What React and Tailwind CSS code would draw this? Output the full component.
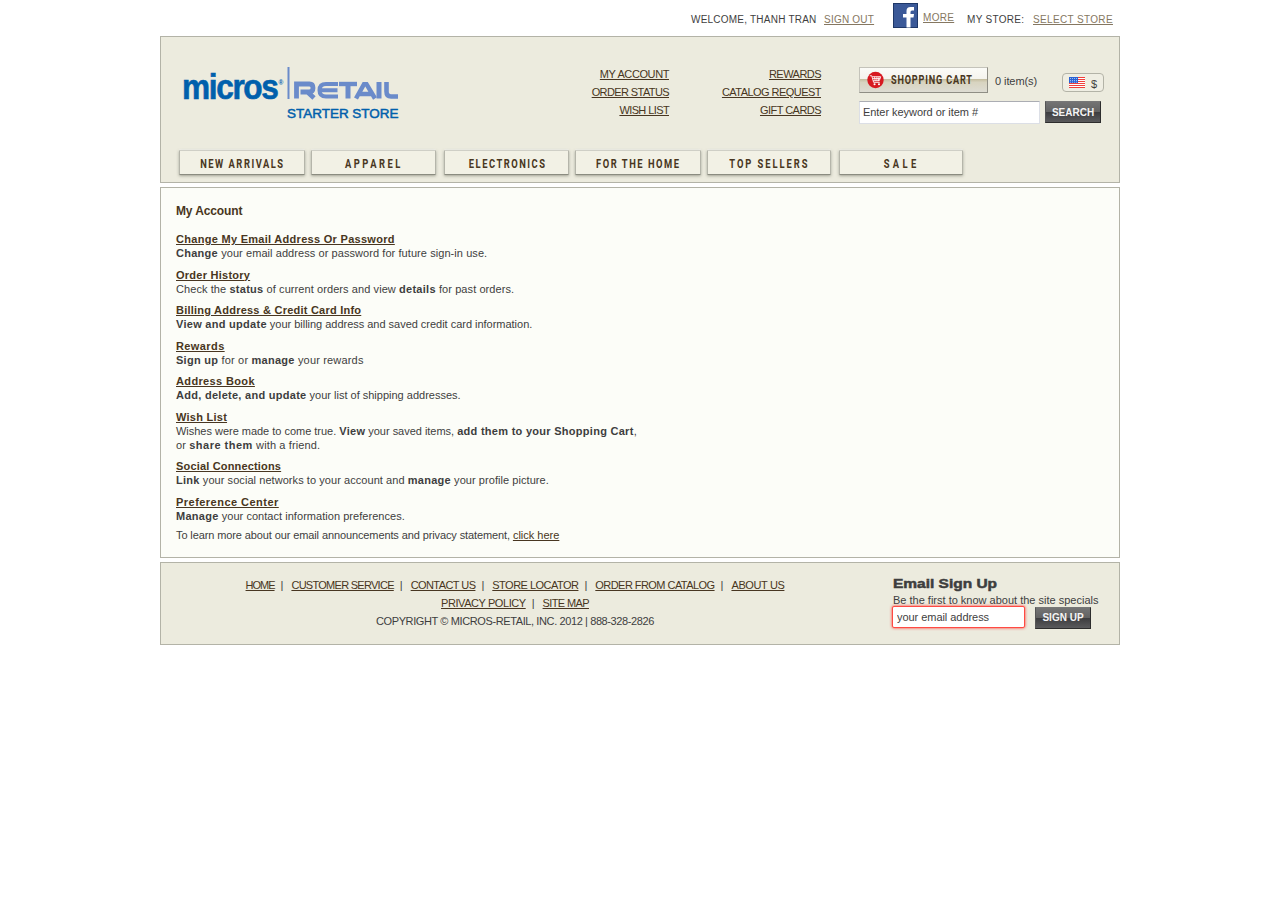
import React from "react";

const link = "underline text-[#483621]";

const NAV = [
  { label: "NEW ARRIVALS", box: "w-[126px] mr-[6px]", text: "tracking-[2.1px]" },
  { label: "APPAREL", box: "w-[125px] mr-[8px]", text: "tracking-[3.5px]" },
  { label: "ELECTRONICS", box: "w-[125px] mr-[6px]", text: "tracking-[2.1px]" },
  { label: "FOR THE HOME", box: "w-[126px] mr-[6px]", text: "tracking-[2.1px]" },
  { label: "TOP SELLERS", box: "w-[124px] mr-[8px]", text: "tracking-[2.7px]" },
  { label: "SALE", box: "w-[124px]", text: "tracking-[4.7px]" },
];

const ITEMS = [
  ["Change My Email Address Or Password", "tracking-[0.29px]", "tracking-[0.07px]", <><b>Change</b> your email address or password for future sign-in use.</>],
  ["Order History", "tracking-[0.25px]", "tracking-[0.08px]", <>Check the <b>status</b> of current orders and view <b>details</b> for past orders.</>],
  ["Billing Address & Credit Card Info", "tracking-[0.23px]", "tracking-[-0.02px]", <><b>View and update</b> your billing address and saved credit card information.</>],
  ["Rewards", "tracking-[0.4px]", "tracking-[0.17px]", <><b>Sign up</b> for or <b>manage</b> your rewards</>],
  ["Address Book", "tracking-[0.36px]", "tracking-[0]", <><b>Add, delete, and update</b> your list of shipping addresses.</>],
  ["Wish List", "tracking-[0.25px]", "tracking-[-0.02px]", <>Wishes were made to come true. <b>View</b> your saved items, <b>add them to your Shopping Cart</b>,<br /><span className="tracking-[0.12px]">or <b className="!tracking-[0.5px]">share them</b> with a friend.</span></>],
  ["Social Connections", "tracking-[0.17px]", "tracking-[0.06px]", <><b>Link</b> your social networks to your account and <b>manage</b> your profile picture.</>],
  ["Preference Center", "tracking-[0.47px]", "tracking-[0.04px]", <><b>Manage</b> your contact information preferences.</>],
];

const FOOTER = [
  ["HOME", "tracking-[-1px]"],
  ["CUSTOMER SERVICE", "tracking-[-0.72px]"],
  ["CONTACT US", "tracking-[-0.57px]"],
  ["STORE LOCATOR", "tracking-[-0.52px]"],
  ["ORDER FROM CATALOG", "tracking-[-0.55px]"],
];

function Logo() {
  return (
    <svg width="220" height="56" viewBox="0 0 220 56" className="block shrink-0 font-['Liberation_Sans',sans-serif]">
      <text x="0" y="32.500" fontSize="34.500" fontWeight="700" fill="#0060ac" stroke="#0060ac" strokeWidth="0.6" letterSpacing="-1.500" textLength="95.500" lengthAdjust="spacingAndGlyphs">micros</text>
      <text x="96.500" y="19" fontSize="6.500" fontWeight="700" fill="#0060ac">®</text>
      <rect x="105.500" y="1" width="2" height="32" fill="#6a8bca" />
      <g fill="none" stroke="#6a8bca" strokeWidth="4">
        <path d="M114.500 32.500V18H127.500Q131 18 131 22Q131 26 127 26H118.500M125.500 26L132 32" strokeWidth="4.800" />
        <path d="M156 18H144Q137.500 18 137.500 24.300Q137.500 30.600 144 30.600H156M138 24.300H155.500" strokeWidth="4" />
        <path d="M157 18H175" strokeWidth="4.400" />
        <path d="M166 18V32.500" strokeWidth="5" />
        <path d="M174 32.500L182 18.200H184.500L193 32.500M178 28H190" strokeWidth="4.500" />
        <path d="M197 16V32.500" strokeWidth="5" />
        <path d="M204.500 16V25.500Q204.500 30.500 209 30.500H216" strokeWidth="4.600" />
      </g>
      <text x="105" y="52" fontSize="13.500" fill="#0060ac" stroke="#0060ac" strokeWidth="0.5" textLength="111.500" lengthAdjust="spacingAndGlyphs">STARTER STORE</text>
    </svg>
  );
}

function DarkButton({ children, className }) {
  return (
    <button className={"h-[22px] w-[56px] shrink-0 border border-[#2d2d2d] border-t-[#777] border-l-[#555] bg-[linear-gradient(#747474_0,#626262_50%,#3d3d3f_52%,#5a5a5c_100%)] text-center text-[10px] font-bold text-[#f5f5f5] " + className}>
      {children}
    </button>
  );
}

function CartButton() {
  return (
    <button className="flex h-[26px] w-[129px] items-center border border-[#c4c3ba] border-r-[#8f8e85] border-b-[#8f8e85] bg-[linear-gradient(#fbfbf7_0,#f5f4ee_44%,#c5bea0_47%,#d8d4c0_60%,#dddcd3_100%)] pl-[7px]">
      <svg width="17" height="18" viewBox="0 0 18 18" className="shrink-0">
        <circle cx="9" cy="9" r="8.700" fill="#d71920" />
        <path d="M3 4.500H5L7 11.500H13.500M5.500 5.500H14.500L13 9.800H6.500M8 5.500L8.700 10M10.500 5.500V10M12.800 5.500L12 10M6 7.500H14" fill="none" stroke="#fff" strokeWidth=".9" />
        <circle cx="8" cy="13.500" r="1.100" fill="#fff" />
        <circle cx="12.700" cy="13.500" r="1.100" fill="#fff" />
      </svg>
      <span className="ml-[7px] block origin-left scale-x-[0.7] font-['Roboto',sans-serif] text-[13px] leading-[24px] font-bold tracking-[1.2px] whitespace-nowrap text-[#483621]">SHOPPING CART</span>
    </button>
  );
}

function Flag() {
  return (
    <svg width="16" height="11" viewBox="0 0 16 11">
      <rect width="16" height="11" fill="#fff" />
      <path d="M0 .5H16M0 2.500H16M0 4.500H16M0 6.500H16M0 8.500H16M0 10.500H16" stroke="#f0403c" />
      <rect width="9" height="6" fill="#2a63d4" />
      <path d="M1 1.500H9M1 3.500H9M1 5.200H9" stroke="#b9d0f8" strokeWidth=".8" strokeDasharray="1 1" />
    </svg>
  );
}

export default function App() {
  return (
    <div className="mx-auto w-[960px] font-['Liberation_Sans',Arial,sans-serif] text-[11px] leading-[14px] text-[#3e3e3e]">
      <div className="flex h-[36px] items-start justify-end pr-[7px] text-[10px] tracking-[0.3px] whitespace-nowrap">
        <span className="mt-[13px] w-[133px] tracking-[0.22px]">WELCOME, THANH TRAN</span>
        <span className="mt-[13px] w-[69px]"><a className="tracking-[0.22px] text-[#857761] underline">SIGN OUT</a></span>
        <svg width="25" height="25" viewBox="0 0 25 25" className="mt-[3px] mr-[5px]">
          <rect x=".5" y=".5" width="24" height="24" fill="#3b5998" stroke="#1e3768" />
          <path d="M13.500 24.500V14.500H10V11H13.500V8Q13.500 4 17.500 4H21V7.500H19Q17.500 7.500 17.500 9V11H21L20.500 14.500H17.500V24.500Z" fill="#fff" />
        </svg>
        <span className="mt-[11px] w-[44px]"><a className="text-[#857761] underline">MORE</a></span>
        <span className="mt-[13px] w-[66px]">MY STORE:</span>
        <span className="mt-[13px] w-[80px]"><a className="tracking-[0.35px] text-[#857761] underline">SELECT STORE</a></span>
      </div>

      <header className="flex h-[147px] flex-col border border-[#b3b3a7] bg-[#ecebde]">
        <div className="flex h-[113px] items-start pt-[29px] pl-[21px] whitespace-nowrap">
          <Logo />
          <ul className="mt-[-1px] w-[267px] text-right leading-[18px] tracking-[-0.6px]">
            <li><a className={link + " tracking-[-0.4px]"}>MY ACCOUNT</a></li>
            <li><a className={link}>ORDER STATUS</a></li>
            <li><a className={link}>WISH LIST</a></li>
          </ul>
          <ul className="mt-[-1px] w-[152px] text-right leading-[18px] tracking-[-0.54px]">
            <li><a className={link}>REWARDS</a></li>
            <li><a className={link}>CATALOG REQUEST</a></li>
            <li><a className={link}>GIFT CARDS</a></li>
          </ul>
          <div className="mt-[1px] ml-[38px]">
            <div className="flex h-[34px] items-start">
              <CartButton />
              <span className="mt-[7px] ml-[7px] w-[67px] tracking-[-0.08px]">0 item(s)</span>
              <div className="mt-[6px] flex h-[19px] w-[42px] items-center justify-between rounded-[4px] border border-[#b3b3a7] bg-[#efeee3] px-[6px]">
                <Flag />
                <span className="mt-[3px]">$</span>
              </div>
            </div>
            <div className="flex">
              <input defaultValue="Enter keyword or item #" className="mr-[5px] block h-[23px] w-[181px] border border-[#dcdfe6] border-t-[#abadb3] bg-white pb-[2px] pl-[3px] text-[11px] tracking-[-0.05px] text-[#3e3e3e]" />
              <DarkButton className="leading-[21px]">SEARCH</DarkButton>
            </div>
          </div>
        </div>
        <nav className="flex pl-[18px]">
          {NAV.map((n) => (
            <a key={n.label} className={"flex h-[25px] justify-center rounded-[1px] border border-[#b5b5aa] border-t-[#cfcfc6] border-b-[#8b8c80] bg-[#f2f1e5] shadow-[0_1px_3px_rgba(90,92,75,0.5),0_-1px_1px_#f6f5ee] " + n.box}>
              <span className={"block scale-x-[0.72] pl-[2px] font-['Roboto',sans-serif] text-[13px] leading-[25px] font-bold whitespace-nowrap text-[#483621] " + n.text}>{n.label}</span>
            </a>
          ))}
        </nav>
      </header>

      <main className="mt-[4px] h-[371px] border border-[#b3b3a7] bg-[#fcfdf8] pt-[16px] pl-[15px]">
        <h1 className="text-[12px] leading-[14px] font-bold tracking-[-0.13px] text-[#483621]">My Account</h1>
        <dl className="mt-[14px]">
          {ITEMS.map(([title, titleTracking, bodyTracking, body]) => (
            <div key={title} className="mb-[7.5px]">
              <dt className={"font-bold " + titleTracking}><a className={link}>{title}</a></dt>
              <dd className={"[&_b]:tracking-[0.28px] " + bodyTracking}>{body}</dd>
            </div>
          ))}
        </dl>
        <p className="-mt-[2.5px]"><span className="tracking-[-0.11px]">To learn more about our email announcements and privacy statement, </span><a className={link}>click here</a></p>
      </main>

      <footer className="mt-[4px] flex h-[83px] border border-[#b3b3a7] bg-[#ecebde]">
        <div className="w-[708px] pt-[13px] text-center leading-[18px] whitespace-nowrap">
          <p className="flex justify-center">
            {FOOTER.map(([t, tracking]) => (
              <span key={t}><a className={link + " " + tracking}>{t}</a><span className="mr-[8px] ml-[6px]">|</span></span>
            ))}
            <a className={link + " tracking-[-0.38px]"}>ABOUT US</a>
          </p>
          <p><a className={link + " tracking-[-0.43px]"}>PRIVACY POLICY</a><span className="mr-[8px] ml-[6px]">|</span><a className={link + " tracking-[-0.62px]"}>SITE MAP</a></p>
          <p className="tracking-[-0.39px]">COPYRIGHT © MICROS-RETAIL, INC. 2012 | 888-328-2826</p>
        </div>
        <div className="pt-[13px] pl-[24px] whitespace-nowrap">
          <h2 className="mt-px origin-left scale-x-[1.19] text-[13px] leading-[14px] font-black [-webkit-text-stroke:0.5px_#3e3e3e]">Email Sign Up</h2>
          <p className="mt-[2px]">Be the first to know about the site specials</p>
          <div className="-ml-px flex">
            <input defaultValue="your email address" className="-mt-px mr-[10px] block h-[22px] w-[133px] rounded-[2px] border border-[#ff4a44] bg-white pl-[4px] text-[11px] tracking-[-0.05px] text-[#3e3e3e] shadow-[0_0_3px_#ff2f2a]" />
            <DarkButton className="leading-[20px]">SIGN UP</DarkButton>
          </div>
        </div>
      </footer>
    </div>
  );
}
